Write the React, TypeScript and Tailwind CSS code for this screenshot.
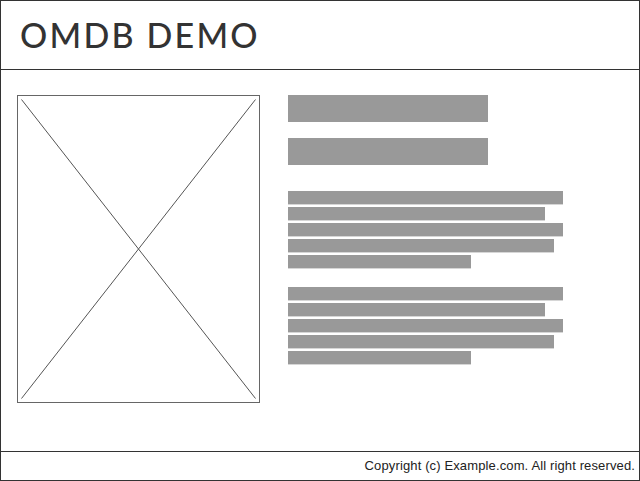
import React from "react";

function Line({ w }: { w: number }) {
  return (
    <div
      className="h-[14px] bg-[#999999] border-b border-[#d6d6d6] mb-[2px]"
      style={{ width: w }}
    />
  );
}

function Para() {
  return (
    <div className="flex flex-col">
      <Line w={275} />
      <Line w={257} />
      <Line w={275} />
      <Line w={266} />
      <Line w={183} />
    </div>
  );
}

export default function App() {
  return (
    <div className="w-[640px] h-[481px] border border-[#333333] flex flex-col bg-white">
      <header className="h-[69px] border-b border-[#333333] flex items-center pl-[19px] shrink-0">
        <h1
          className="text-[34px] leading-none font-medium text-[#333333] tracking-[2.2px]"
          style={{ fontFamily: "Lato, 'Noto Sans', sans-serif" }}
        >
          OMDB DEMO
        </h1>
      </header>
      <main className="flex-1 flex pl-4 pt-[25px] gap-[28px]">
        <div className="w-[243px] h-[308px] border border-[#666666] relative shrink-0">
          <svg className="absolute inset-0" width="241" height="306" viewBox="0 0 241 306">
            <line x1="3.5" y1="3.5" x2="237.5" y2="302.5" stroke="#555555" strokeWidth="1" />
            <line x1="237.5" y1="3.5" x2="3.5" y2="302.5" stroke="#555555" strokeWidth="1" />
          </svg>
        </div>
        <div className="flex flex-col">
          <div className="w-[200px] h-[27px] bg-[#999999]" />
          <div className="w-[200px] h-[27px] bg-[#999999] mt-[16px]" />
          <div className="mt-[26px]">
            <Para />
          </div>
          <div className="mt-[16px]">
            <Para />
          </div>
        </div>
      </main>
      <footer className="h-[29px] border-t border-[#333333] flex items-center justify-end pr-[4px] shrink-0">
        <span
          className="text-[13px] text-[#222222] tracking-[0.13px]"
          style={{ fontFamily: "'Liberation Sans', Arial, sans-serif" }}
        >
          Copyright (c) Example.com. All right reserved.
        </span>
      </footer>
    </div>
  );
}
